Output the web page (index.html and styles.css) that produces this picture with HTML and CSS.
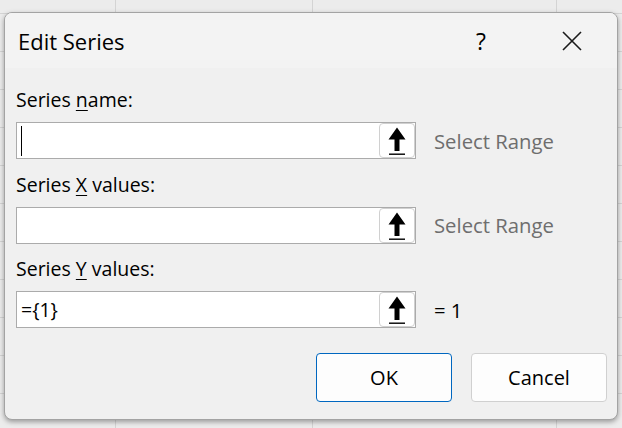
FILE: index.html
```html
<!DOCTYPE html>
<html lang="en">
<head>
  <meta charset="UTF-8" />
  <title>Edit Series</title>
  <link rel="stylesheet" href="styles.css">
</head>
<body>
  <div class="dialog">
    <div class="titlebar">
      <span class="title">Edit Series</span>
      <span class="help">?</span>
      <span class="close">
        <svg width="20" height="20" viewBox="0 0 20 20"><path d="M1 1 L19 19 M19 1 L1 19" stroke="#1a1a1a" stroke-width="1.6" fill="none"/></svg>
      </span>
    </div>
    <div class="content">
      <div class="field">
        <label class="field-label">Series <u>n</u>ame:</label>
        <div class="field-row">
          <div class="ref-box">
            <span class="ref-value"><span class="caret"></span></span>
            <button class="collapse">
              <svg width="34" height="33" viewBox="0 0 34 33"><path d="M17 3.5 L25.5 15.5 L19.5 15.5 L19.5 27 L14.5 27 L14.5 15.5 L8.5 15.5 Z" fill="#000"/><rect x="9" y="29.5" width="16" height="1.4" fill="#000"/></svg>
            </button>
          </div>
          <span class="ref-preview muted">Select Range</span>
        </div>
      </div>
      <div class="field">
        <label class="field-label">Series <u>X</u> values:</label>
        <div class="field-row">
          <div class="ref-box">
            <span class="ref-value"></span>
            <button class="collapse">
              <svg width="34" height="33" viewBox="0 0 34 33"><path d="M17 3.5 L25.5 15.5 L19.5 15.5 L19.5 27 L14.5 27 L14.5 15.5 L8.5 15.5 Z" fill="#000"/><rect x="9" y="29.5" width="16" height="1.4" fill="#000"/></svg>
            </button>
          </div>
          <span class="ref-preview muted">Select Range</span>
        </div>
      </div>
      <div class="field">
        <label class="field-label">Series <u>Y</u> values:</label>
        <div class="field-row">
          <div class="ref-box">
            <span class="ref-value">={1}</span>
            <button class="collapse">
              <svg width="34" height="33" viewBox="0 0 34 33"><path d="M17 3.5 L25.5 15.5 L19.5 15.5 L19.5 27 L14.5 27 L14.5 15.5 L8.5 15.5 Z" fill="#000"/><rect x="9" y="29.5" width="16" height="1.4" fill="#000"/></svg>
            </button>
          </div>
          <span class="ref-preview">= 1</span>
        </div>
      </div>
      <div class="actions">
        <button class="btn default">OK</button>
        <button class="btn">Cancel</button>
      </div>
    </div>
  </div>
</body>
</html>
```

FILE: styles.css
```css
* {
  box-sizing: border-box;
}
body {
  margin: 0;
  height: 428px;
  overflow: hidden;
  font-family: "Open Sans", "Noto Sans", sans-serif;
  color: #000;
  /* worksheet grid behind the dialog */
  background-color: #ececec;
  background-image:
    linear-gradient(to right, transparent 115px, #d4d4d4 115px, #d4d4d4 116px, transparent 116px,
      transparent 312px, #d4d4d4 312px, #d4d4d4 313px, transparent 313px,
      transparent 556px, #d4d4d4 556px, #d4d4d4 557px, transparent 557px),
    repeating-linear-gradient(to bottom, transparent 0, transparent 13px, #d4d4d4 13px, #d4d4d4 14px, transparent 14px, transparent 38px);
  padding: 12px 0 0 4px;
}
.dialog {
  width: 614px;
  height: 408px;
  background: #f0f0f0;
  border: 1px solid #a3a3a3;
  border-radius: 8px;
  box-shadow: 0 2px 5px rgba(0, 0, 0, 0.35);
  overflow: hidden;
  display: flex;
  flex-direction: column;
}
.titlebar {
  height: 55px;
  background: #f3f3f3;
  display: flex;
  align-items: center;
  padding-left: 13px;
}
.title {
  font-size: 22px;
  flex-grow: 1;
}
.help {
  font-size: 23px;
  width: 30px;
  margin-right: 66px;
  text-align: center;
}
.close {
  width: 20px;
  height: 20px;
  margin-right: 35px;
  display: flex;
}
.content {
  flex-grow: 1;
  padding: 0 10px 0 11px;
  display: flex;
  flex-direction: column;
}
.field-label {
  display: block;
  font-size: 19.5px;
  line-height: 26px;
  margin-top: 12.5px;
  height: 35px;
}
.field:first-child .field-label {
  margin-top: 19px;
}
.field-label u {
  text-underline-offset: 3px;
  text-decoration-thickness: 1px;
}
.field-row {
  display: flex;
  align-items: center;
}
.ref-box {
  width: 400px;
  height: 37px;
  background: #fff;
  border: 1px solid #ababab;
  display: flex;
  align-items: stretch;
}
.ref-value {
  flex-grow: 1;
  display: flex;
  align-items: center;
  padding-left: 4px;
  font-size: 19.5px;
}
.caret {
  width: 1px;
  height: 30px;
  background: #000;
}
.collapse {
  width: 36px;
  margin: 0;
  padding: 0;
  border: 1px solid #d0d0d0;
  border-radius: 4px;
  background: #fff;
  display: flex;
  align-items: center;
  justify-content: center;
}
.ref-preview {
  margin-left: 18px;
  font-size: 20.3px;
}
.muted {
  color: #6e6e6e;
}
.actions {
  display: flex;
  justify-content: flex-end;
  gap: 19px;
  margin-top: 25px;
}
.btn {
  width: 136px;
  height: 49px;
  font-family: inherit;
  font-size: 20px;
  color: #000;
  background: #fdfdfd;
  border: 1px solid #d0d0d0;
  border-radius: 4px;
}
.btn.default {
  border-color: #0067c0;
}
```
